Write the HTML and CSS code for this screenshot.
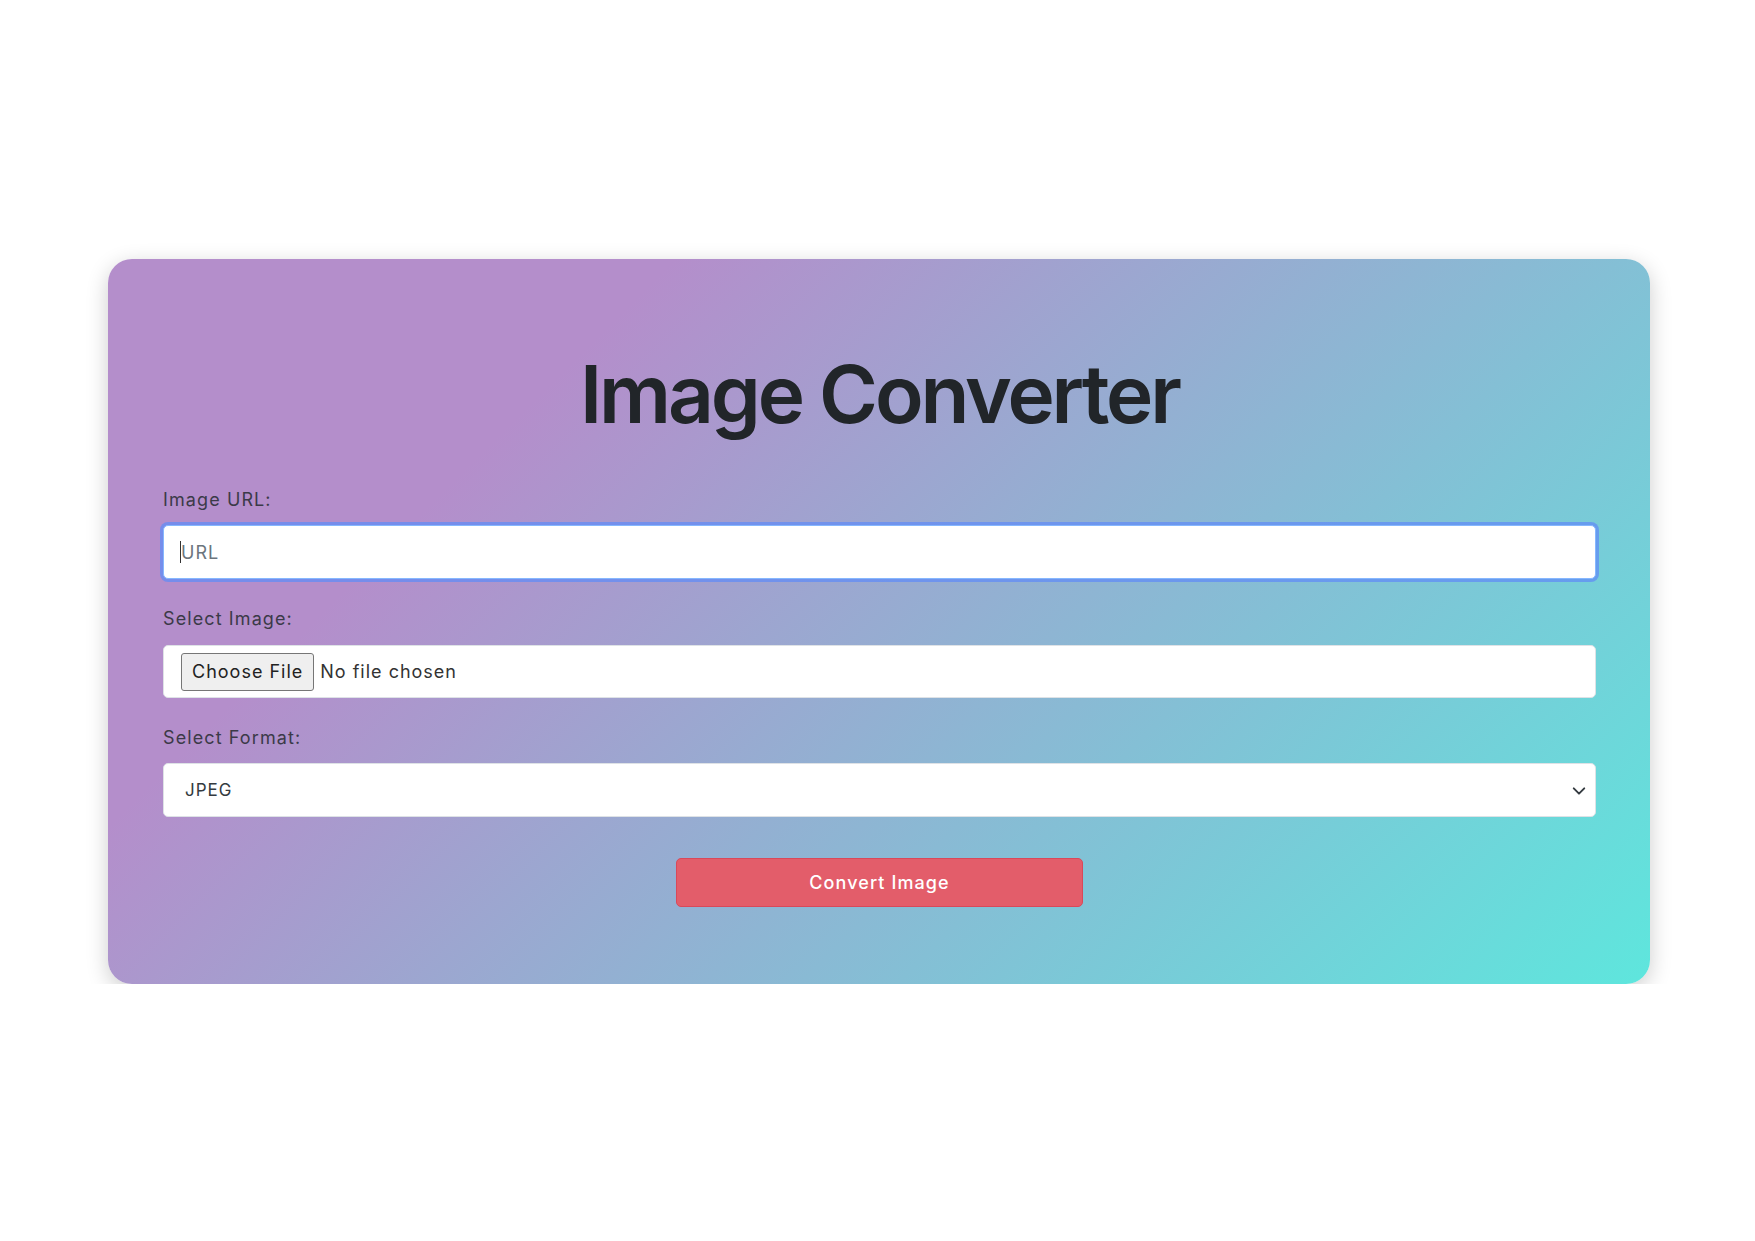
FILE: index.html
```html
<!DOCTYPE html>
<html lang="en">
<head>
<meta charset="utf-8">
<title>Image Converter</title>
<link rel="stylesheet" href="styles.css">
</head>
<body>
<main class="page">
  <section class="card">
    <h1 class="title">Image Converter</h1>
    <form class="form">
      <div class="group">
        <label class="label" for="url">Image URL:</label>
        <div class="control control-focus">
          <span class="caret"></span><span class="placeholder">URL</span>
        </div>
      </div>
      <div class="group">
        <label class="label">Select Image:</label>
        <div class="control control-file">
          <span class="file-btn">Choose File</span>
          <span class="file-text">No file chosen</span>
        </div>
      </div>
      <div class="group">
        <label class="label">Select Format:</label>
        <div class="control control-select">
          <span class="select-value">JPEG</span>
          <svg class="chevron" width="14" height="14" viewBox="0 0 16 16"><path d="M2 5l6 6 6-6" fill="none" stroke="#343a40" stroke-width="2.2" stroke-linecap="round" stroke-linejoin="round"/></svg>
        </div>
      </div>
      <div class="actions">
        <button type="button" class="btn">Convert Image</button>
      </div>
    </form>
  </section>
</main>
</body>
</html>
```
FILE: styles.css
```css
* { box-sizing: border-box; }
html, body { margin: 0; padding: 0; background: #ffffff; }
body {
  font-family: "Inter", "Open Sans", "DejaVu Sans", sans-serif;
  color: #212529;
}
.page {
  padding: 259px 105px 0 108px;
}
.card {
  width: 1542px;
  height: 725px;
  border-radius: 24px;
  background: linear-gradient(135deg, #b48ecb 25%, #5ee6dd 100%);
  box-shadow: 0 6px 22px rgba(0, 0, 0, 0.2);
  padding: 87px 54px 0 55px;
}
.title {
  margin: 0 0 44px;
  text-align: center;
  font-size: 80px;
  line-height: 96px;
  font-weight: 600;
  letter-spacing: -3.1px;
  color: #212529;
}
.form { display: flex; flex-direction: column; }
.group { display: flex; flex-direction: column; margin-bottom: 26px; }
.label {
  font-size: 18px;
  line-height: 27px;
  color: #3b3a48;
  letter-spacing: 1.1px;
  margin-bottom: 12px;
}
.control {
  height: 53px;
  background: #fff;
  border: 1px solid #dee2e6;
  border-radius: 5px;
  display: flex;
  align-items: center;
  font-size: 18px;
  letter-spacing: 1px;
  color: #212529;
}
.control-focus {
  border: 1px solid #86b7fe;
  box-shadow: 0 0 0 3px rgba(98, 140, 245, 0.75);
  padding-left: 16px;
  height: 54px;
}
.caret {
  width: 1px;
  height: 22px;
  background: #333;
}
.placeholder { color: #6c757d; }
.control-file { padding-left: 17px; margin-top: 1px; }
.file-btn {
  height: 38px;
  padding: 0 10px;
  display: flex;
  align-items: center;
  background: #efefef;
  border: 1px solid #767676;
  border-radius: 3px;
  color: #222;
}
.file-text { margin-left: 6px; color: #333; }
.control-select {
  position: relative;
  padding-left: 21px;
  height: 54px;
}
.select-value { color: #343a40; font-size: 17px; }
.chevron {
  position: absolute;
  right: 9px;
  top: 20px;
}
.actions { display: flex; justify-content: center; margin-top: 15px; }
.btn {
  width: 407px;
  height: 49px;
  background: #e35d6a;
  border: 1px solid #d9485a;
  border-radius: 5px;
  color: #fff;
  font-family: inherit;
  font-size: 18px;
  font-weight: 500;
  letter-spacing: 1.1px;
}
```
